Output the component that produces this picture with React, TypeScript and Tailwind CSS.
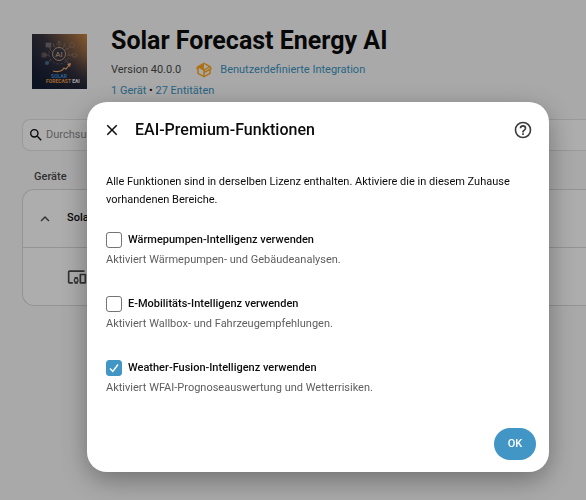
import { useState } from "react";

const features = [
    {
        id: "heatpump",
        label: "Wärmepumpen-Intelligenz verwenden",
        helper: "Aktiviert Wärmepumpen- und Gebäudeanalysen.",
        enabled: false,
    },
    {
        id: "emobility",
        label: "E-Mobilitäts-Intelligenz verwenden",
        helper: "Aktiviert Wallbox- und Fahrzeugempfehlungen.",
        enabled: false,
    },
    {
        id: "weather",
        label: "Weather-Fusion-Intelligenz verwenden",
        helper: "Aktiviert WFAI-Prognoseauswertung und Wetterrisiken.",
        enabled: true,
    },
];

const icons = {
    close: "M19,6.41L17.59,5L12,10.59L6.41,5L5,6.41L10.59,12L5,17.59L6.41,19L12,13.41L17.59,19L19,17.59L13.41,12L19,6.41Z",
    help: "M11,18H13V16H11V18M12,2A10,10 0 0,0 2,12A10,10 0 0,0 12,22A10,10 0 0,0 22,12A10,10 0 0,0 12,2M12,20C7.59,20 4,16.41 4,12C4,7.59 7.59,4 12,4C16.41,4 20,7.59 20,12C20,16.41 16.41,20 12,20M12,6A4,4 0 0,0 8,10H10A2,2 0 0,1 12,8A2,2 0 0,1 14,10C14,12 11,11.75 11,15H13C13,12.75 16,12.5 16,10A4,4 0 0,0 12,6Z",
    chevronUp: "M7.41,15.41L12,10.83L16.59,15.41L18,14L12,8L6,14L7.41,15.41Z",
    magnify: "M9.5,3A6.5,6.5 0 0,1 16,9.5C16,11.11 15.41,12.59 14.44,13.73L14.71,14H15.5L20.5,19L19,20.5L14,15.5V14.71L13.73,14.44C12.59,15.41 11.11,16 9.5,16A6.5,6.5 0 0,1 3,9.5A6.5,6.5 0 0,1 9.5,3M9.5,5C7,5 5,7 5,9.5C5,12 7,14 9.5,14C12,14 14,12 14,9.5C14,7 12,5 9.5,5Z",
    devices: "M3 6H21V4H3C1.9 4 1 4.9 1 6V18C1 19.1 1.9 20 3 20H7V18H3V6M13 12H9V13.78C8.39 14.33 8 15.11 8 16C8 16.89 8.39 17.67 9 18.22V20H13V18.22C13.61 17.67 14 16.88 14 16S13.61 14.33 13 13.78V12M11 17.5C10.17 17.5 9.5 16.83 9.5 16S10.17 14.5 11 14.5 12.5 15.17 12.5 16 11.83 17.5 11 17.5M22 8H16C15.5 8 15 8.5 15 9V19C15 19.5 15.5 20 16 20H22C22.5 20 23 19.5 23 19V9C23 8.5 22.5 8 22 8M21 18H17V10H21V18Z",
    box: "M2,10.96C1.5,10.68 1.35,10.07 1.63,9.59L3.13,7C3.24,6.8 3.41,6.66 3.6,6.58L11.43,2.18C11.59,2.06 11.79,2 12,2C12.21,2 12.41,2.06 12.57,2.18L20.47,6.62C20.66,6.72 20.82,6.88 20.91,7.08L22.36,9.6C22.64,10.08 22.47,10.69 22,10.96L21,11.54V16.5C21,16.88 20.79,17.21 20.47,17.38L12.57,21.82C12.41,21.94 12.21,22 12,22C11.79,22 11.59,21.94 11.43,21.82L3.53,17.38C3.21,17.21 3,16.88 3,16.5V10.96C2.7,11.13 2.32,11.14 2,10.96M12,4.15V4.15L12,10.85V10.85L17.96,7.5L12,4.15M5,15.91L11,19.29V12.58L5,9.21V15.91M19,15.91V12.69L14,15.59C13.67,15.77 13.3,15.76 13,15.6V19.29L19,15.91M13.85,13.36L20.13,9.73L19.55,8.72L13.27,12.35L13.85,13.36Z",
};

const Icon = ({ path, className }: { path: string; className?: string }) => (
    <svg viewBox="0 0 24 24" fill="currentColor" aria-hidden="true" className={className}>
        <path d={path} />
    </svg>
);

const Logo = () => (
    <svg viewBox="0 0 55 55" className="size-[55px] shrink-0" role="img" aria-label="Solar Forecast EAI">
        <defs>
            <linearGradient id="night" x1="0" y1="0.8" x2="1" y2="0">
                <stop offset="0" stopColor="#141e36" />
                <stop offset="0.5" stopColor="#3a3640" />
                <stop offset="1" stopColor="#c98444" />
            </linearGradient>
            <linearGradient id="floor" x1="0" y1="0" x2="0" y2="1">
                <stop offset="0.4" stopColor="#111a30" stopOpacity="0" />
                <stop offset="1" stopColor="#111a30" stopOpacity="0.6" />
            </linearGradient>
        </defs>
        <rect width="55" height="55" fill="url(#night)" />
        <rect width="55" height="55" fill="url(#floor)" />
        <g fill="none" stroke="#a58d80" strokeWidth="0.6" opacity="0.8">
            <path d="M20 18l-3-5M17 21h-5M19 25l-3 4M33 16l5-3M35 21h5M33 25l3 4M27 13v-5M23 14l-2-5M31 14l2-5" />
            <circle cx="27" cy="20" r="10" strokeDasharray="2 2" />
            <rect x="14" y="9" width="5" height="4" fill="#7d7b83" />
            <path d="M38 13v-3l2-2 2 2v3z" />
            <path d="M10 19h4v4h-4zM12 19v4M10 21h4" />
            <path d="M40 20h5l-1 3h-3z" />
            <circle cx="27" cy="8" r="1" />
            <circle cx="37" cy="30" r="1" />
        </g>
        <circle cx="15" cy="29" r="2" fill="#486d8c" />
        <circle cx="27" cy="20" r="6.5" fill="#3b3a44" stroke="#d0a483" strokeWidth="0.9" />
        <text x="27" y="23" textAnchor="middle" fontSize="8" fill="#dfb798" fontFamily="Roboto, sans-serif">AI</text>
        <path d="M21 37q8 2 11-3l2 1 4-5" fill="none" stroke="#f0ab70" strokeWidth="1.2" />
        <path d="M35 30l4-1-1 4z" fill="#f0ab70" />
        <text x="27" y="44" textAnchor="middle" fontSize="5" fontWeight="700" fill="#3f8fd0" fontFamily="Roboto, sans-serif">SOLAR</text>
        <text x="14" y="49" fontSize="5" fontWeight="700" fill="#e89a45" fontFamily="Roboto, sans-serif">
            FORECAST<tspan fill="#eef2fa"> EAI</tspan>
        </text>
    </svg>
);

const IntegrationPage = () => (
    <main className="pt-[25px] pl-[22px]">
        <header className="flex pl-[10px] gap-6">
            <div className="pt-[9px]">
                <Logo />
            </div>
            <div>
                <h1 className="text-[25px] leading-8 font-bold">Solar Forecast Energy AI</h1>
                <div className="flex items-center h-5 mt-[3px] text-[11px] text-[#4a4a4a]">
                    <span>Version 40.0.0</span>
                    <Icon path={icons.box} className="size-[18px] ml-[14px] mr-[7px] text-[#ffa820]" />
                    <a href="#integration" className="text-[#3a94c2]">Benutzerdefinierte Integration</a>
                </div>
                <p className="mt-px text-[11px] leading-5">
                    <a href="#devices" className="text-[#3a94c2]">1 Gerät</a>
                    {" • "}
                    <a href="#entities" className="text-[#3a94c2]">27 Entitäten</a>
                </p>
            </div>
        </header>

        <label className="flex items-center gap-[2px] h-8 mt-[18px] pl-[5px] bg-white border border-r-0 border-[#e3e3e3] rounded-l-lg">
            <Icon path={icons.magnify} className="size-4" />
            <input
                type="search"
                aria-label="Suche"
                placeholder="Durchsuche Einträge"
                className="flex-1 min-w-0 text-[11px] outline-none placeholder:text-[#8c8c8c]"
            />
        </label>

        <h2 className="mt-4 pl-3 text-[11px] leading-5 font-medium text-[#4a4a4a]">Geräte</h2>
        <section className="mt-[2px] bg-white border border-r-0 border-[#dadada] rounded-l-xl text-[11px]">
            <div className="flex items-center gap-[13px] h-[58px] pl-[13px] border-b border-[#dadada]">
                <button aria-label="Einklappen">
                    <Icon path={icons.chevronUp} className="size-[18px] text-[#4a4a4a]" />
                </button>
                <span className="font-medium">Solar Forecast Energy AI</span>
            </div>
            <div className="flex items-center h-[57px] pl-[44px]">
                <Icon path={icons.devices} className="size-5 text-[#4a4a4a]" />
            </div>
        </section>
    </main>
);

const PremiumDialog = () => {
    const [checked, setChecked] = useState<Record<string, boolean>>(
        Object.fromEntries(features.map((f) => [f.id, f.enabled]))
    );

    return (
        <div
            role="dialog"
            aria-labelledby="dialog-title"
            className="w-full max-w-[462px] bg-white rounded-[20px] shadow-[0_8px_28px_rgba(0,0,0,0.35)]"
        >
            <div className="flex items-center h-14 pl-4 pr-4">
                <button aria-label="Schließen">
                    <Icon path={icons.close} className="size-[18px]" />
                </button>
                <h2 id="dialog-title" className="flex-1 ml-[14px] text-base font-medium">EAI-Premium-Funktionen</h2>
                <button aria-label="Hilfe">
                    <Icon path={icons.help} className="size-5 text-[#3c3c3c]" />
                </button>
            </div>

            <div className="px-[19px] pt-[15px]">
                <p className="text-[11px] leading-[18px]">
                    Alle Funktionen sind in derselben Lizenz enthalten. Aktiviere die in diesem Zuhause vorhandenen Bereiche.
                </p>
                <div className="mt-[21px] space-y-6">
                    {features.map((f) => (
                        <div key={f.id}>
                            <div className="flex items-center gap-[6px] h-5">
                                <span className="relative flex">
                                    <input
                                        id={f.id}
                                        type="checkbox"
                                        checked={checked[f.id]}
                                        onChange={(e) => setChecked({ ...checked, [f.id]: e.target.checked })}
                                        aria-describedby={f.id + "-helper"}
                                        className="peer appearance-none size-4 rounded-[3px] border border-[#757575] bg-white checked:bg-[#4296c6] checked:border-[#4296c6]"
                                    />
                                    <svg
                                        viewBox="0 0 16 16"
                                        aria-hidden="true"
                                        className="absolute inset-0 size-4 hidden peer-checked:block pointer-events-none"
                                    >
                                        <path d="M4 8.5l2.8 3L12 4.5" fill="none" stroke="#fff" strokeWidth="1.4" />
                                    </svg>
                                </span>
                                <label htmlFor={f.id} className="text-[11px] font-medium">{f.label}</label>
                            </div>
                            <p id={f.id + "-helper"} className="text-[11px] leading-5 text-[#5e5e5e]">{f.helper}</p>
                        </div>
                    ))}
                </div>
            </div>

            <div className="flex justify-end pt-[30px] pr-[13px] pb-3">
                <button className="h-8 w-[42px] rounded-full bg-[#4296c6] text-white text-[11px] font-medium">OK</button>
            </div>
        </div>
    );
};

export default function App() {
    return (
        <div className="min-h-screen bg-[#fafafa] text-[#0c0c0c] font-['Roboto',sans-serif]">
            <IntegrationPage />
            <div className="fixed inset-0 flex items-start justify-center pt-[102px] pl-[87px] pr-[37px] bg-black/32">
                <PremiumDialog />
            </div>
        </div>
    );
}
